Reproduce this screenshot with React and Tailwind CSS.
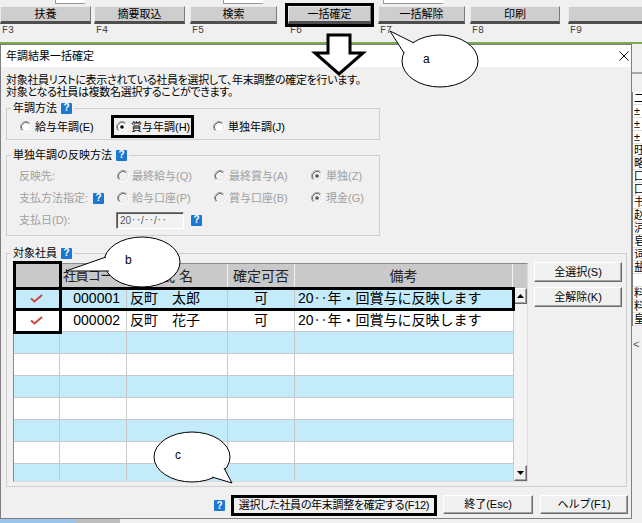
import React from 'react';

const FONT = "[font-family:'Liberation_Sans','Noto_Sans_CJK_JP',sans-serif]";

function Help() {
  return (
    <span className="inline-flex w-[11px] h-[11px] shrink-0 items-center justify-center rounded-[1px] bg-[#1b78d0] text-[10px] font-bold leading-none text-white">
      ?
    </span>
  );
}

function Radio({ checked, disabled }) {
  return (
    <svg width="12" height="12" viewBox="0 0 12 12" className="shrink-0">
      <circle cx="6" cy="6" r="5" fill={disabled ? '#f0f0f0' : '#ffffff'} />
      <path d="M9.89 2.11A5.5 5.5 0 0 0 2.11 9.89" fill="none" stroke="#a0a0a0" />
      <path d="M9.18 2.82A4.5 4.5 0 0 0 2.82 9.18" fill="none" stroke="#696969" />
      <path d="M2.11 9.89A5.5 5.5 0 0 0 9.89 2.11" fill="none" stroke="#ffffff" />
      <path d="M2.82 9.18A4.5 4.5 0 0 0 9.18 2.82" fill="none" stroke="#e3e3e3" />
      {checked && <circle cx="6" cy="6" r="1.8" fill={disabled ? '#555555' : '#000000'} />}
    </svg>
  );
}

function RadioItem({ label, checked, disabled, className = '' }) {
  return (
    <div className={`flex items-center gap-[3px] ${className}`}>
      <Radio checked={checked} disabled={disabled} />
      <span className="whitespace-nowrap">{label}</span>
    </div>
  );
}

function Group({ title, className = '', children }) {
  return (
    <fieldset className={`border border-[#cfcfcf] ${className}`}>
      <legend className="ml-[4px] px-[2px] h-[14px] text-[11px] leading-[14px]">
        <span className="flex items-center gap-[4px]">
          {title}
          <Help />
        </span>
      </legend>
      {children}
    </fieldset>
  );
}

const winBtn =
  'flex items-center justify-center bg-[#f0f0f0] border border-t-white border-l-white border-r-[#6b6b6b] border-b-[#6b6b6b] shadow-[inset_-1px_-1px_0_#a5a5a5] text-[11px] text-black whitespace-nowrap';

const tools = [
  { t: '扶養', f: 'F3', c: 'w-[91px]' },
  { t: '摘要取込', f: 'F4', c: 'ml-[3px] w-[91px]' },
  { t: '検索', f: 'F5', c: 'ml-[5px] w-[87px]' },
  { t: '一括確定', f: 'F6', c: 'ml-[11px] w-[83px]', box: true },
  { t: '一括解除', f: 'F7', c: 'ml-[7px] w-[87px]' },
  { t: '印刷', f: 'F8', c: 'ml-[5px] w-[90px]' },
  { t: '', f: 'F9', c: 'ml-[8px] w-[80px]' },
];

const cols = ['w-[46px]', 'w-[67px]', 'w-[101px]', 'w-[67px]', 'w-[218px]'];

const rows = [
  { check: true, code: '000001', name: '反町　太郎', ok: '可', memo: '20‥年・回賞与に反映します' },
  { check: true, code: '000002', name: '反町　花子', ok: '可', memo: '20‥年・回賞与に反映します' },
  {}, {}, {}, {}, {}, {}, {},
];

function Check() {
  return (
    <svg width="13" height="9" viewBox="0 0 13 9">
      <path d="M1 4.5 L4.5 7.5 L12 1" fill="none" stroke="#d2423c" strokeWidth="2" />
    </svg>
  );
}

function Table() {
  return (
    <div className="relative w-[515px] h-[219px] border border-t-[#8a8a8a] border-l-[#8a8a8a] border-r-[#dcdcdc] border-b-[#dcdcdc] bg-white flex flex-col">
      <div className="flex h-[24px] bg-[#c9c9c9] text-[14px] text-[#222]">
        <div className={`${cols[0]} border-r border-r-[#f2f2f2]`} />
        <div className={`${cols[1]} border-r border-r-[#f2f2f2] flex items-center pl-[3px] text-[13px] tracking-[-0.6px] whitespace-nowrap`}>社員コード</div>
        <div className={`${cols[2]} border-r border-r-[#f2f2f2] flex items-center justify-center whitespace-pre`}>氏 名</div>
        <div className={`${cols[3]} border-r border-r-[#f2f2f2] flex items-center justify-center`}>確定可否</div>
        <div className={`${cols[4]} border-r border-r-[#f2f2f2] flex items-center justify-center`}>備考</div>
        <div className="flex-1" />
      </div>
      <div className="flex h-[193px]">
        <div className="w-[499px] overflow-hidden">
          {rows.map((r, i) => (
            <div
              key={i}
              className={`flex h-[22px] shrink-0 border-b border-b-[#c8c8c8] text-[14px] ${i % 2 === 0 ? 'bg-[#c4ebfa]' : 'bg-white'}`}
            >
              <div className={`${cols[0]} border-r border-r-[#c8c8c8] flex items-center justify-center`}>
                {r.check && <Check />}
              </div>
              <div className={`${cols[1]} border-r border-r-[#c8c8c8] flex items-center justify-end pr-[6px]`}>{r.code}</div>
              <div className={`${cols[2]} border-r border-r-[#c8c8c8] flex items-center pl-[3px] whitespace-nowrap`}>{r.name}</div>
              <div className={`${cols[3]} border-r border-r-[#c8c8c8] flex items-center justify-center`}>{r.ok}</div>
              <div className={`${cols[4]} flex items-center pl-[3px] whitespace-nowrap`}>{r.memo}</div>
            </div>
          ))}
        </div>
        <div className="w-[14px] flex flex-col border-l border-l-[#c8c8c8] bg-[#f4f4f4]">
          <div className={`${winBtn} h-[16px]`}>
            <svg width="7" height="4" viewBox="0 0 7 4"><path d="M0 4 L3.5 0 L7 4 Z" fill="#000" /></svg>
          </div>
          <div className="flex-1" />
          <div className={`${winBtn} h-[16px]`}>
            <svg width="7" height="4" viewBox="0 0 7 4"><path d="M0 0 L7 0 L3.5 4 Z" fill="#000" /></svg>
          </div>
        </div>
      </div>
      <div className="absolute left-[-1px] top-[-3px] w-[49px] h-[73px] border-[3px] border-black" />
      <div className="absolute left-[-1px] top-[23px] w-[502px] h-[24px] border-[3px] border-black" />
    </div>
  );
}

function Dialog() {
  return (
    <div className="w-[632px] h-full shrink-0 flex flex-col border border-[#7f7f7f] bg-[#f0f0f0]">
      <div className="h-[22px] shrink-0 bg-white flex items-center justify-between pl-[5px] pr-[2px] text-[11px]">
        <span>年調結果一括確定</span>
        <svg width="10" height="10" viewBox="0 0 10 10">
          <path d="M0.5 0.5 L9.5 9.5 M9.5 0.5 L0.5 9.5" stroke="#111" strokeWidth="1" />
        </svg>
      </div>
      <div className="flex-1 flex flex-col px-[5px] pt-[7px]">
        <div className="text-[11px] leading-[12px] [font-feature-settings:'palt'] tracking-[-0.3px]">
          <div>対象社員リストに表示されている社員を選択して、年末調整の確定を行います。</div>
          <div>対象となる社員は複数名選択することができます。</div>
        </div>

        <Group title="年調方法" className="w-[374px] mt-[3px]">
          <div className="flex items-center h-[14px] mt-[5px] mb-[5px] pl-[13px] text-[11px]">
            <RadioItem label="給与年調(E)" className="w-[96px]" />
            <div className="relative w-[97px]">
              <RadioItem label="賞与年調(H)" checked />
              <div className="absolute left-[-5px] top-[-4px] w-[83px] h-[23px] border-[3px] border-black" />
            </div>
            <RadioItem label="単独年調(J)" />
          </div>
        </Group>

        <Group title="単独年調の反映方法" className="w-[374px] mt-[8px]">
          <div className="pt-[3px] pb-[4px] pl-[12px] text-[11px] text-[#a0a0a0]">
            <div className="flex items-center h-[22px]">
              <div className="w-[98px]">反映先:</div>
              <RadioItem label="最終給与(Q)" disabled className="w-[97px]" />
              <RadioItem label="最終賞与(A)" disabled className="w-[97px]" />
              <RadioItem label="単独(Z)" disabled checked />
            </div>
            <div className="flex items-center h-[22px]">
              <div className="w-[98px] flex items-center gap-[5px]">
                <span>支払方法指定:</span>
                <Help />
              </div>
              <RadioItem label="給与口座(P)" disabled className="w-[97px]" />
              <RadioItem label="賞与口座(B)" disabled className="w-[97px]" />
              <RadioItem label="現金(G)" disabled checked />
            </div>
            <div className="flex items-center h-[22px]">
              <div className="w-[97px]">支払日(D):</div>
              <div className="w-[68px] h-[17px] flex items-center pl-[3px] border border-t-[#7a7a7a] border-l-[#7a7a7a] border-r-white border-b-white shadow-[inset_1px_1px_0_#505050] bg-[#f2f2f2] text-[10px] text-[#555]">
                20‥/‥/‥
              </div>
              <div className="ml-[7px] flex">
                <Help />
              </div>
            </div>
          </div>
        </Group>

        <Group title="対象社員" className="w-[621px] mt-[10px]">
          <div className="flex pt-[3px] pb-[4px] pl-[6px]">
            <Table />
            <div className="ml-[6px] mt-[-1px] flex flex-col gap-[5px]">
              <div className={`${winBtn} w-[88px] h-[20px]`}>全選択(S)</div>
              <div className={`${winBtn} w-[88px] h-[20px]`}>全解除(K)</div>
            </div>
          </div>
        </Group>

        <div className="flex items-start mt-[8px] h-[21px]">
          <div className="ml-[208px] mt-[5px] flex shrink-0">
            <Help />
          </div>
          <div className="ml-[6px] w-[206px] h-[21px] shrink-0 border-[3px] border-black bg-[#f0f0f0] flex items-center justify-center text-[11px] [font-feature-settings:'palt'] tracking-[-0.3px] whitespace-nowrap">
            選択した社員の年末調整を確定する(F12)
          </div>
          <div className={`${winBtn} ml-[6px] w-[90px] h-[19px] shrink-0`}>終了(Esc)</div>
          <div className={`${winBtn} ml-[7px] w-[88px] h-[19px] shrink-0`}>ヘルプ(F1)</div>
        </div>
      </div>
    </div>
  );
}

const stripChars = ['二', '±', '±', '±', '旺', '略', '匚', '匚', '书', '赵', '沪', '皂', '词', '盐', '', '料', '料', '皇'];

function RightStrip() {
  return (
    <div className="flex-1 flex flex-col overflow-hidden bg-[#f0f0f0]">
      <div className="h-[28px]" />
      <div className="h-[2px] bg-[#a9a9a9]" />
      <div className="mt-[18px] flex flex-col bg-white border-l border-l-[#808080] text-[11px] leading-[12px] overflow-hidden">
        {stripChars.map((c, i) => (
          <div key={i} className="h-[13px] pl-[1px] border-b border-b-[#e0e0e0] whitespace-nowrap">{c}</div>
        ))}
      </div>
      <div className="mt-[10px] pl-[1px] text-[11px] text-[#555]">&lt;</div>
    </div>
  );
}

export default function App() {
  return (
    <div className={`relative w-[642px] h-[523px] overflow-hidden bg-[#f0f0f0] text-black ${FONT}`}>
      <div className="h-[42px] flex flex-col">
        <div className="h-[4px] flex">
          <div className="ml-[55px] w-[30px] bg-white border-l border-b border-[#9a9a9a]" />
          <div className="ml-[138px] w-[40px] bg-white border-l border-b border-[#9a9a9a]" />
          <div className="ml-[120px] w-[60px] bg-white border-l border-b border-[#9a9a9a]" />
        </div>
        <div className="mt-[2px] flex">
          {tools.map((b) => (
            <div key={b.f} className={`flex flex-col shrink-0 ${b.c}`}>
              <div className="relative">
                <div className="h-[18px] flex items-center justify-center bg-[#cecece] border-t border-l border-t-[#ececec] border-l-[#ececec] border-r border-r-[#7a7a7a] border-b-[3px] border-b-[#4e4e4e] text-[11px]">
                  {b.t}
                </div>
                {b.box && <div className="absolute left-[-3px] top-[-3px] w-[89px] h-[24px] border-[3px] border-black" />}
              </div>
              <div className="mt-[2px] pl-[2px] h-[10px] text-[10px] leading-[10px] text-[#444] [font-family:'Liberation_Mono',monospace]">
                {b.f}
              </div>
            </div>
          ))}
        </div>
      </div>
      <div className="h-[2px] bg-[#7aab4f]" />
      <div className="flex h-[475px]">
        <Dialog />
        <RightStrip />
      </div>
      <div className="h-[4px] flex">
        <div className="w-[75px] bg-[#9cc3e8]" />
        <div className="w-[45px] bg-[#bdbdbd]" />
        <div className="flex-1 bg-[#f0f0f0]" />
      </div>

      <svg className="absolute inset-0 pointer-events-none" width="642" height="523" viewBox="0 0 642 523">
        <polygon points="328,35 350,35 350,53 363,53 339,74 315,53 328,53" fill="#fff" stroke="#000" strokeWidth="3" />

        <ellipse cx="440" cy="61" rx="38" ry="26" fill="#fff" stroke="#000" strokeWidth="1" />
        <polyline points="414,43 390,31 404,53" fill="#fff" stroke="#000" strokeWidth="1" />
        <text x="423" y="63" fontSize="12" fontFamily="Liberation Sans, sans-serif">a</text>

        <ellipse cx="142" cy="262" rx="38" ry="25" fill="#fff" stroke="#000" strokeWidth="1" />
        <polyline points="106,257 66,271 109,271" fill="#fff" stroke="#000" strokeWidth="1" />
        <text x="125" y="264" fontSize="12" fontFamily="Liberation Sans, sans-serif">b</text>

        <ellipse cx="192" cy="457" rx="38" ry="25" fill="#fff" stroke="#000" strokeWidth="1" />
        <polyline points="212,477 232,483 224,468" fill="#fff" stroke="#000" strokeWidth="1" />
        <text x="175" y="459" fontSize="12" fontFamily="Liberation Sans, sans-serif">c</text>
      </svg>
    </div>
  );
}
